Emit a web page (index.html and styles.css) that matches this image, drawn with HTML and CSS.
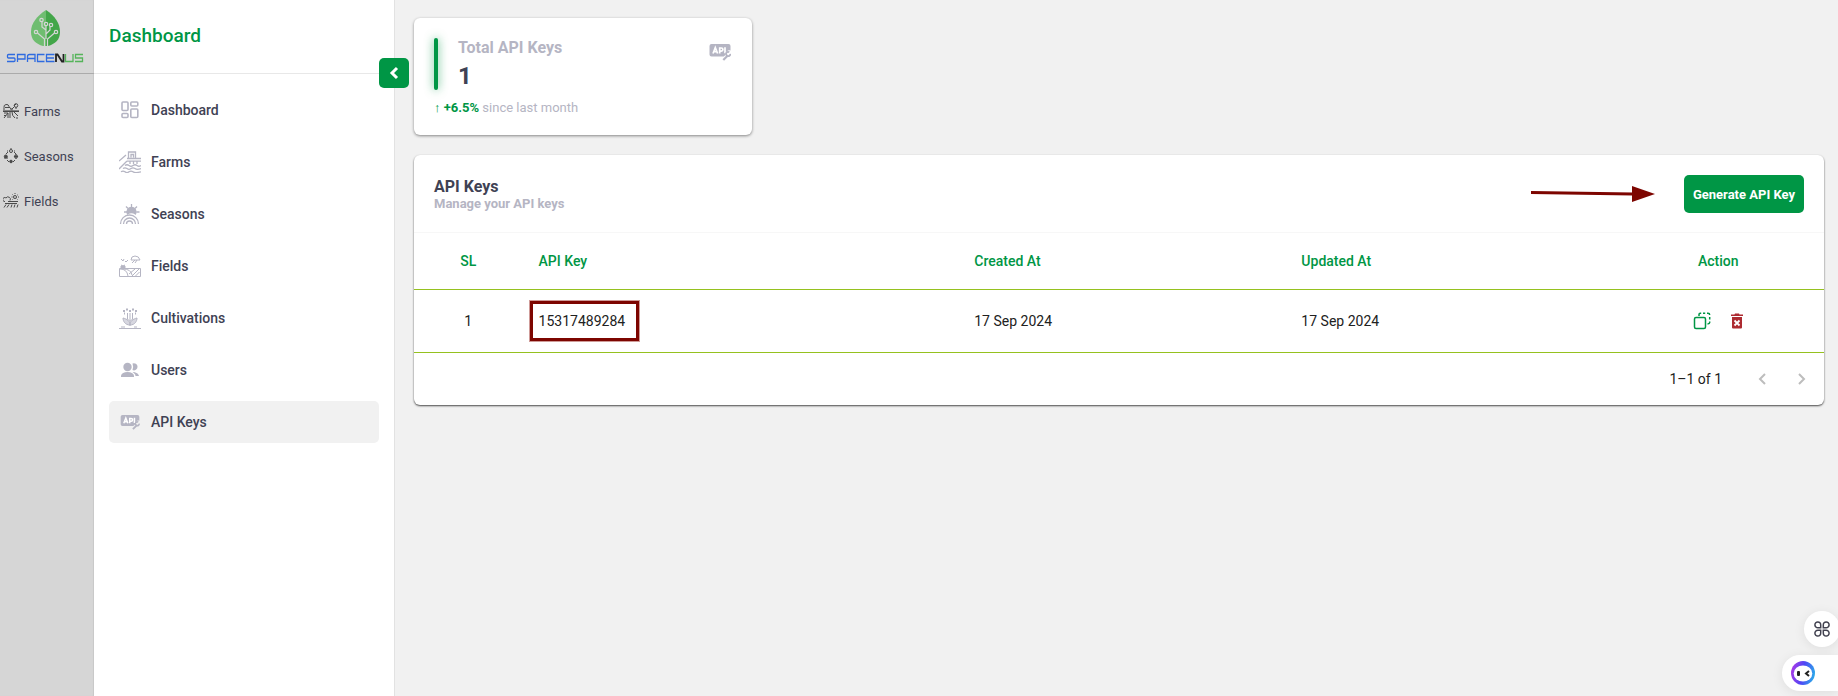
FILE: index.html
```html
<!DOCTYPE html>
<html lang="en">
<head>
<meta charset="utf-8">
<title>API Keys</title>
<link rel="stylesheet" href="styles.css">
</head>
<body>
<svg class="sprite" aria-hidden="true">
  <symbol id="api" viewBox="0 0 22 18">
    <path fill="currentColor" d="M2.500 1h17A2 2 0 0 1 21.500 3v4.500a4 4 0 0 0-5 4.500l-1.800 1.500H2.500a2 2 0 0 1-2-2V3a2 2 0 0 1 2-2z"/>
    <path class="cut" fill="none" stroke-width="1.700" d="M4 10.500 6.300 4.500 8.600 10.500M5 8.700h2.800M10.700 10.500V5h1.600a1.600 1.600 0 0 1 0 3.200h-1.600M16 4.200v6"/>
    <path fill="none" stroke="currentColor" stroke-width="2.200" d="m14.300 17 4.200-4.200"/>
    <path fill="none" stroke="currentColor" stroke-width="1.800" d="M20.300 9.200a2 2 0 0 0-2.300 3.400 2 2 0 0 0 3.300-1.800"/>
  </symbol>
</svg>
<div class="app">
  <aside class="rail">
    <a class="brand" href="#" aria-label="Spacenus">
      <svg width="78" height="54" viewBox="0 0 78 54" fill="none">
        <path fill="#6fbd70" d="M40 0C31 6 25 13 25 22c0 8 5 12 12 14h3z"/>
        <path fill="#43a649" d="M40 0c9 6 14 13 14 22 0 8-5 12-12 14h-2z"/>
        <g stroke="#d6d6d6" stroke-width="1.200">
          <path d="M38.500 36v-7l-7-6M41.500 36v-7l7-6M40 29v-9l-4-3v-5M40 24l4-4v-3M40 20v-4"/>
          <circle cx="30" cy="22" r="1.700"/><circle cx="50" cy="22" r="1.700"/><circle cx="35.500" cy="10" r="1.700"/><circle cx="40" cy="14" r="1.700"/><circle cx="45" cy="15" r="1.700"/>
        </g>
        <g stroke-width="1.300">
          <g stroke="#2f6be0"><path d="M9 44.500H2.500a1 1 0 0 0-1 1v1.500a1 1 0 0 0 1 1H8a1 1 0 0 1 1 1v1.500a1 1 0 0 1-1 1H1"/><path d="M11.500 52v-7.500h7.500V49h-7.500"/><path d="M21.500 52v-5.500a2 2 0 0 1 2-2h5.500V52M21.500 48.500H29"/><path d="M38.500 44.500h-7v7h7"/><path d="M48.500 44.500h-8v7h8M40.500 48H48"/></g>
          <path stroke="#222" stroke-width="1.800" d="M50 52v-7.500h1.500l4.500 7h1.500V44"/>
          <g stroke="#55b45a"><path d="M59.500 44v7.500h7.500V44"/><path d="M77 44.500h-7.500V48h7v3.500H69"/></g>
        </g>
      </svg>
    </a>
    <nav class="rail-nav">
      <a href="#"><svg width="16" height="16" viewBox="0 0 16 16" fill="none" stroke="currentColor"><path d="M1 7V4.500a2 2 0 0 1 5-1L8 6v1M2 4.500h5M9 6l2-2M11 3l2-2M9 7.500V5M13 6V4"/><path stroke-width="1.600" d="M0 8.200h16"/><path d="M1 10h4l-4 5M7 9v6M9 9q0 4 3 6M11 9l4 4M5 10v5M1 12.500h2M13 15h2"/><circle cx="13" cy="2.500" r="1.800"/></svg>Farms</a>
      <a href="#"><svg width="16" height="16" viewBox="0 0 16 16" fill="none" stroke="currentColor"><circle cx="8" cy="3" r="1.500"/><circle cx="2.800" cy="8.500" r="1.500" fill="currentColor"/><circle cx="13" cy="8.500" r="1.600"/><circle cx="8" cy="13.500" r="1.300" fill="currentColor"/><path d="M8 0v1M5 3H4m7 0h1M3 6l2-2M11 4l2 2M4 12l2 2M12 12l-2 2M1 10h4M13 6v5M11 8.500h4"/></svg>Seasons</a>
      <a href="#"><svg width="16" height="16" viewBox="0 0 16 16" fill="none" stroke="currentColor"><path d="M2 8.500a2 2 0 1 1 1-3.500 2 2 0 0 1 4 2.500M5 8.500h10M2 10.500h12M3 11.500l-2 3M6 11.500l-2 3M9 11.500l-1 3M12 11.500l-1 3M15 11.500l-1 3M12 0v1M8.500 4h1M15 4h1M9.500 1.500l.7.700M15 1.500l-.7.700M9.500 6.500l.7-.7M14.500 6.500l-.7-.7"/><circle cx="12" cy="4" r="1.500"/></svg>Fields</a>
    </nav>
  </aside>

  <aside class="side">
    <header class="side-head"><h1>Dashboard</h1></header>
    <button class="collapse" type="button" aria-label="Collapse menu"><svg width="10" height="14" viewBox="0 0 10 14" fill="none" stroke="#fff" stroke-width="3"><path d="M8 2 3 7l5 5"/></svg></button>
    <nav class="menu">
      <a href="#"><svg width="22" height="22" viewBox="0 0 22 22" fill="none" stroke="currentColor" stroke-width="1.600"><rect x="3" y="3" width="6" height="8.500" rx="1"/><rect x="11.800" y="3" width="7" height="4" rx="1"/><rect x="3" y="14.500" width="6" height="4" rx="1"/><rect x="11.800" y="10" width="7" height="8.500" rx="1"/></svg>Dashboard</a>
      <a href="#"><svg width="22" height="22" viewBox="0 0 22 22" fill="none" stroke="currentColor" stroke-width="1.300"><path d="M9.500 7V1h7v6M12 6.500V3.500h2.500v3M8 7.500h14M8 10.200h14M11 10v3M14.500 10v3M18 10v3M0 10l7-6M0 18l8-8M6 14.500q2-1.500 4 0t4 0 4 0 4 0M4 17.600q2-1.500 4 0t4 0 4 0 6 0M2 20.800q2-1.500 4 0t4 0 4 0 8 0"/></svg>Farms</a>
      <a href="#"><svg width="22" height="22" viewBox="0 0 22 22" fill="none" stroke="currentColor" stroke-width="1.300"><path fill="currentColor" d="M8.500 11a4.500 4.500 0 1 1 8 0q-4-3-8 0z"/><path d="M12.500 1v3M5 9h3M17.500 9h3M7 3.500l2 2M18 3.500l-2 2M1.500 21a9 9 0 0 1 18 0M4.500 21a6 6 0 0 1 12 0M7.500 21a3 3 0 0 1 6 0"/></svg>Seasons</a>
      <a href="#"><svg width="22" height="22" viewBox="0 0 22 22" fill="none" stroke="currentColor"><path d="M.5 13.500h21v8H.5zM1 14q7 0 8 7M4 14q8 0 9 6M20 14l-7 7M16 14l-6 5M20.500 17l-4 4"/><path fill="currentColor" d="M2 11h4v2H2z"/><path d="M2 10l2 1 2-1M2 4l2 2 1-2M6 6l1 1 2-2M12 5q0-4 4-4t5 4zM16 5l-3 3M18 5l-2 3"/></svg>Fields</a>
      <a href="#"><svg width="22" height="22" viewBox="0 0 22 22" fill="none" stroke="currentColor"><path d="M11 6v13M8.500 6v6l2 2M13.500 6v6l-2 2M5.500 5.500v2M16.500 5.500v2M0 21.500h22M2 20h4M15 20h3"/><path fill="#d7d7e0" d="M11 18C6 18 4 14 4 11c4 1 7 3 7 7zM11 18c5 0 7-4 7-7-4 1-7 3-7 7z"/><path stroke-width="2" d="M8 1.500v2M14 1.500v2M11 3v2M5 3v2M17 3v2"/></svg>Cultivations</a>
      <a href="#"><svg width="22" height="22" viewBox="0 0 22 22" fill="currentColor"><circle cx="8.500" cy="8" r="4.200"/><path d="M2 18v-1.500Q3 13 8.500 13t6.500 3.500V18z"/><path d="M13.500 4.500a3.600 3.600 0 1 1 0 6.600q1.300-3.200 0-6.600zM15 13q4.500 1 5 4h-3.500q0-2.500-3-3.500z"/></svg>Users</a>
      <a href="#" class="active"><svg width="22" height="16"><use href="#api"/></svg>API Keys</a>
    </nav>
  </aside>

  <main class="main">
    <div class="stats">
      <section class="card stat">
        <div class="stat-top">
          <span class="bar"></span>
          <div class="stat-text"><h2>Total API Keys</h2><p>1</p></div>
          <svg class="stat-icon" width="22" height="18"><use href="#api"/></svg>
        </div>
        <p class="trend"><span>↑ <b>+6.5%</b></span> since last month</p>
      </section>
    </div>

    <section class="card panel">
      <header class="panel-head">
        <div class="panel-title"><h2>API Keys</h2><p>Manage your API keys</p></div>
        <svg class="arrow" width="126" height="18" viewBox="0 0 126 18"><path d="M1 7.500 103 9" stroke="#7d0500" stroke-width="3"/><path d="M102 1 125 9 102 17z" fill="#7d0500"/></svg>
        <button class="generate" type="button">Generate API Key</button>
      </header>
      <table class="keys">
        <colgroup><col class="c-sl"><col class="c-key"><col class="c-date"><col class="c-date"><col class="c-act"></colgroup>
        <thead><tr><th class="mid">SL</th><th>API Key</th><th>Created At</th><th>Updated At</th><th class="mid">Action</th></tr></thead>
        <tbody><tr>
          <td class="mid">1</td>
          <td><span class="marked">15317489284</span></td>
          <td>17 Sep 2024</td>
          <td>17 Sep 2024</td>
          <td><div class="actions">
            <button type="button" aria-label="Copy"><svg width="18" height="18" viewBox="0 0 18 18" fill="none" stroke="#009645" stroke-width="1.500"><rect x="1.500" y="5.500" width="11" height="11" rx="1.500"/><path d="M6 4V2.500Q6 1.300 7.200 1.300h1M10 1.300h2.200M14 1.300h1q1.700 0 1.700 1.700M16.700 5v2.500M16.700 9.500v1q0 1.300-2.200 1.500"/></svg></button>
            <button type="button" aria-label="Delete"><svg width="14" height="18" viewBox="0 0 14 18"><path fill="#ad2b31" d="M1 2.500h3.500L5 1.500h4l.5 1H13V4H1zM2 5h10v10.500q0 1-1 1H3q-1 0-1-1z"/><path stroke="#fff" stroke-width="1.800" d="m4.500 8.500 5 5m0-5-5 5"/></svg></button>
          </div></td>
        </tr></tbody>
      </table>
      <footer class="pager">
        <span>1–1 of 1</span>
        <button type="button" aria-label="Previous page" disabled><svg width="8" height="12" viewBox="0 0 8 12" fill="none" stroke="#bdbdbd" stroke-width="2"><path d="M7 1 2 6l5 5"/></svg></button>
        <button type="button" aria-label="Next page" disabled><svg width="8" height="12" viewBox="0 0 8 12" fill="none" stroke="#bdbdbd" stroke-width="2"><path d="m1 1 5 5-5 5"/></svg></button>
      </footer>
    </section>
  </main>
</div>

<div class="dock">
  <button class="dock-grid" type="button" aria-label="Apps"><svg width="16" height="16" viewBox="0 0 16 16" fill="none" stroke="#41414f" stroke-width="1.500"><path d="M6.700 6.700H4a2.900 2.900 0 1 1 2.700-2.700zM9.300 6.700V4A2.900 2.900 0 1 1 12 6.700zM6.700 9.300V12A2.900 2.900 0 1 1 4 9.300zM9.300 9.300H12A2.900 2.900 0 1 1 9.300 12z"/></svg></button>
  <button class="dock-bot" type="button" aria-label="Assistant"><svg width="24" height="24" viewBox="0 0 24 24" fill="none"><defs><linearGradient id="ring" x1="0" y1=".6" x2="1" y2=".8"><stop offset="0" stop-color="#a13be8"/><stop offset=".45" stop-color="#4f46f5"/><stop offset="1" stop-color="#28b4e8"/></linearGradient></defs><circle cx="12" cy="12" r="12" fill="url(#ring)"/><ellipse cx="12" cy="12.500" rx="9.300" ry="8" fill="#fff"/><rect x="6" y="10" width="3" height="5" rx="1" fill="#222"/><path stroke="#222" stroke-width="2" d="m18 10-3 2.500 3 2.500"/></svg></button>
</div>
</body>
</html>
```
FILE: styles.css
```css
* { box-sizing: border-box; }
body, h1, h2, p { margin: 0; }
body { background: #f1f1f1; color: #3f4254; font-family: Roboto, sans-serif; font-size: 14px; }
a { color: inherit; text-decoration: none; }
button { border: 0; padding: 0; font: inherit; background: none; display: flex; align-items: center; justify-content: center; cursor: pointer; }
svg { flex: none; display: block; }
.sprite { position: absolute; width: 0; height: 0; }
.app { display: flex; min-height: 100vh; }

.rail { width: 94px; flex: none; background: #d6d6d6; box-shadow: inset -1px 0 1px #c8c8c8; }
.brand { display: flex; justify-content: center; height: 74px; padding: 10px 5px 0 0; border-bottom: 1px solid #ababab; }
.rail-nav { display: flex; flex-direction: column; gap: 15px; padding: 22px 3px; font-size: 13px; }
.rail-nav a { display: flex; align-items: center; gap: 5px; height: 30px; }
.rail-nav svg { color: #4a4a4a; }

.side { position: relative; width: 301px; flex: none; background: #fff; border-right: 1px solid #e2e2e2; }
.side-head { height: 74px; padding: 24px 15px 0; border-bottom: 1px solid #e8e8e8; }
.side-head h1 { font-size: 19px; line-height: 24px; font-weight: 500; color: #009645; }
.collapse { position: absolute; top: 58px; right: -15px; width: 30px; height: 30px; border-radius: 5px; background: #009645; }
.menu { display: flex; flex-direction: column; gap: 10px; padding: 15px; }
.menu a { display: flex; align-items: center; gap: 10px; height: 42px; padding: 0 10px; border-radius: 5px; font-size: 14px; font-weight: 500; }
.menu svg { color: #b5b5c3; }
.menu .active { background: #f1f1f1; }
.cut { stroke: #fff; }

.main { flex: 1; min-width: 0; padding: 18px 14px 18px 19px; }
.stats { display: grid; grid-template-columns: repeat(4, 1fr); gap: 20px; margin-bottom: 20px; }
.card { background: #fff; border-radius: 6px; box-shadow: 0 1px 3px rgba(0, 0, 0, .45); }
.stat { padding: 20px 20px 17px; }
.stat-top { display: flex; }
.bar { width: 4px; height: 52px; border-radius: 2px; background: #009645; box-shadow: 0 0 10px rgba(0, 150, 69, .7); }
.stat-text { flex: 1; padding-left: 20px; }
.stat-text h2 { font-size: 16px; line-height: 20px; font-weight: 700; color: #b5b5c3; }
.stat-text p { font-size: 24px; line-height: 36px; font-weight: 700; }
.stat-icon { margin: 5px 1px 0 0; color: #b5b5c3; }
.trend { margin-top: 4px; line-height: 20px; font-size: 13px; color: #b5b5c3; }
.trend span { color: #009645; }

.stat { padding-bottom: 17px; }
.panel { box-shadow: 0 1px 2px rgba(0, 0, 0, .7); }
.panel-head { display: flex; align-items: flex-start; padding: 20px 20px 19px; border-bottom: 1px solid #f7f7f7; }
.panel-title { flex: 1; padding-top: 3px; }
.panel-title h2 { font-size: 16px; line-height: 18px; font-weight: 700; }
.panel-title p { font-size: 13px; line-height: 16px; font-weight: 700; color: #b5b5c3; }
.arrow { margin: 10px 28px 0 0; }
.generate { height: 38px; padding: 0 9px; border-radius: 5px; background: #009645; color: #fff; font-size: 13px; font-weight: 700; }
.keys { width: 100%; border-collapse: separate; border-spacing: 0; table-layout: fixed; }
.c-sl { width: 7.7%; }
.c-key { width: 30.9%; }
.c-date { width: 23.2%; }
.c-act { width: 15%; }
.keys th, .keys td { padding: 0 16px; text-align: left; border-bottom: 1px solid #95c11f; }
.keys th { height: 57px; font-size: 14px; font-weight: 500; color: #009645; }
.keys td { height: 63px; font-size: 14px; color: #212121; }
.keys .mid { text-align: center; }
.marked { position: relative; }
.marked::after { content: ""; position: absolute; inset: -13px -15px -13px -10px; border: 4px solid #7d0500; outline: 1px solid #cf9b98; outline-offset: -1px; }
.actions { display: flex; justify-content: center; gap: 19px; }
.pager { display: flex; align-items: center; justify-content: flex-end; height: 52px; padding-right: 2px; font-size: 14px; color: #212121; }
.pager span { margin-right: 20px; }
.pager button { width: 40px; height: 40px; }

.dock { position: fixed; right: 0; bottom: 5px; display: flex; flex-direction: column; align-items: flex-end; gap: 8px; }
.dock button { height: 36px; background: #fff; box-shadow: 0 2px 12px rgba(0, 0, 0, .08); }
.dock .dock-grid { width: 36px; margin-right: -2px; border-radius: 18px; }
.dock .dock-bot { width: 56px; padding-right: 14px; border-radius: 18px 0 0 18px; }
```
